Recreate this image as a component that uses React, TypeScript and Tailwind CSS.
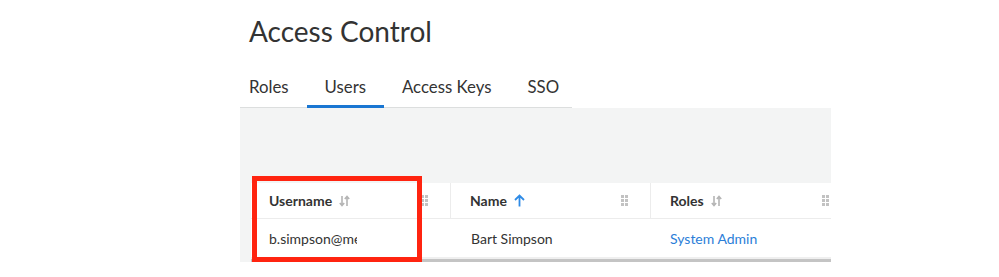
const SortIcon = () => (
  <svg width="11" height="12" viewBox="0 0 11 12" className="ml-[7px]" fill="none" stroke="#b5b5b5" strokeWidth="1.6">
    <path d="M3 1v9.5M0.8 8L3 10.5 5.2 8" />
    <path d="M8 11V1.5M5.8 4L8 1.5 10.2 4" />
  </svg>
);

const UpArrow = () => (
  <svg width="11" height="13" viewBox="0 0 11 13" className="ml-[7px]" fill="none" stroke="#2f8be6" strokeWidth="1.8">
    <path d="M5.5 12.5V1.5M1 6L5.5 1.5 10 6" />
  </svg>
);

const DragHandle = () => (
  <svg width="7" height="11" viewBox="0 0 7 11" fill="#c2c2c2">
    <rect x="0" y="0" width="3" height="3" />
    <rect x="4" y="0" width="3" height="3" />
    <rect x="0" y="4" width="3" height="3" />
    <rect x="4" y="4" width="3" height="3" />
    <rect x="0" y="8" width="3" height="3" />
    <rect x="4" y="8" width="3" height="3" />
  </svg>
);

const tabs = ['Roles', 'Users', 'Access Keys', 'SSO'];

export default function App() {
  return (
    <div className="w-[999px] h-[277px] bg-white overflow-hidden text-[#333] relative" style={{ fontFamily: 'Lato, "Open Sans", sans-serif' }}>
      <div className="ml-[240px] w-[591px]">
        <h1 className="pl-[9px] pt-[14px] text-[28px] leading-[34px] h-[68px]">Access Control</h1>

        <div className="flex w-[332px] border-b border-[#dcdede] h-[40px]">
          {tabs.map((t, i) => (
            <div
              key={t}
              className={`shrink-0 whitespace-nowrap text-[16.8px] leading-[38px] ${i === 0 ? 'pl-[9px] pr-[18px]' : 'px-[18px]'} ${
                t === 'Users' ? 'border-b-[3px] border-[#1976d2] -mb-px' : ''
              }`}
            >
              {t}
            </div>
          ))}
        </div>

        <div className="bg-[#f3f4f4] pt-[75px] pl-[11px]">
          <div className="bg-white">
            <div className="flex h-[36px] border-b border-[#ececec] text-[14px] font-bold">
              <div className="w-[200px] flex items-center pl-[18px] pr-[22px] border-r border-[#ececec]">
                <span>Username</span>
                <SortIcon />
                <span className="ml-auto"><DragHandle /></span>
              </div>
              <div className="w-[200px] flex items-center pl-[19px] pr-[22px] border-r border-[#ececec]">
                <span>Name</span>
                <UpArrow />
                <span className="ml-auto"><DragHandle /></span>
              </div>
              <div className="flex-1 flex items-center pl-[19px] pr-[2px]">
                <span>Roles</span>
                <SortIcon />
                <span className="ml-auto"><DragHandle /></span>
              </div>
            </div>
            <div className="flex h-[38px] items-center text-[14px]">
              <div className="w-[200px] pl-[18px]">
                <div className="w-[88px] overflow-hidden whitespace-nowrap">b.simpson@mega.com</div>
              </div>
              <div className="w-[200px] pl-[20px]">Bart Simpson</div>
              <div className="flex-1 pl-[19px] text-[#2b7ed8]">System Admin</div>
            </div>
            <div className="h-[2px] bg-[#efefef]" />
            <div className="h-[3px] bg-[#c4c4c4]" />
          </div>
        </div>
      </div>

      <div className="absolute left-[252px] top-[176px] w-[170px] h-[86px] border-[5px] border-[#ff2410]" />
    </div>
  );
}
